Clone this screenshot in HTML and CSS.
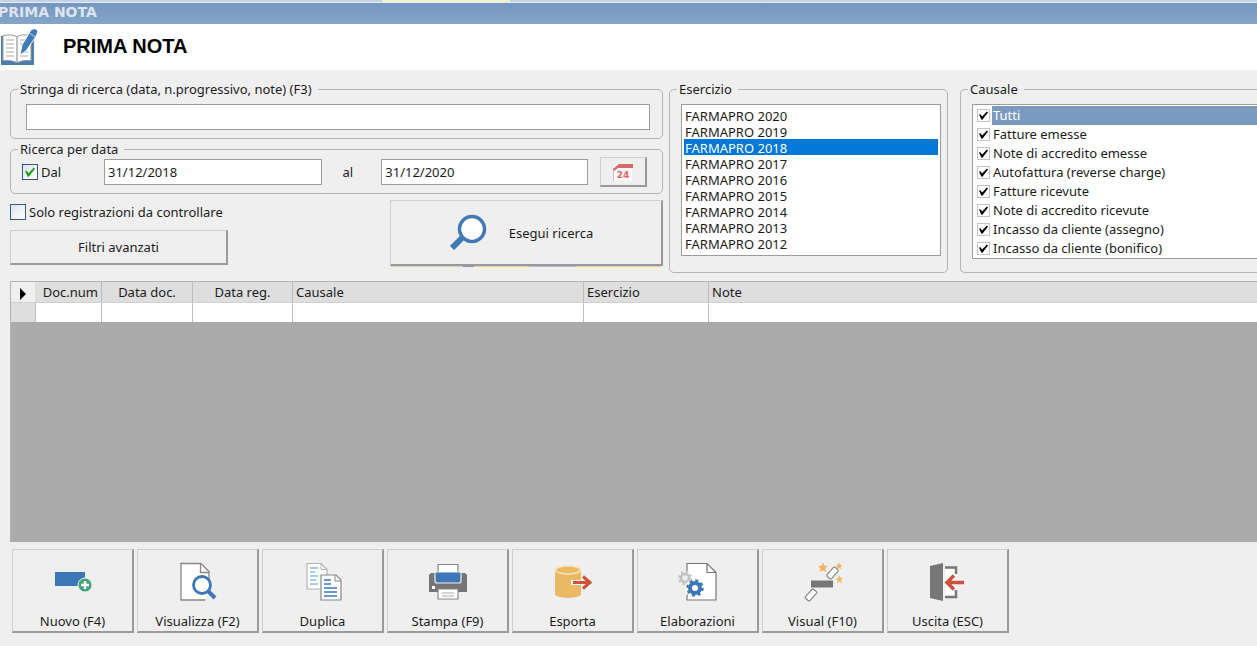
FILE: index.html
```html
<!DOCTYPE html>
<html lang="it">
<head>
<meta charset="utf-8">
<title>Prima nota</title>
<link rel="stylesheet" href="styles.css">
</head>
<body>
<div class="strip"><span class="strip-tab"></span></div>
<div class="titlebar">PRIMA NOTA</div>
<header class="header">
  <svg class="header-icon" viewBox="0 0 38 38" aria-hidden="true">
    <path d="M1 8h3v25h27V8h3v29H1z" fill="#4a7db0"/>
    <path d="M3 7.500q8-2 14 1q6-3 14-1v25q-8-1-14 2q-6-3-14-2z" fill="#fff" stroke="#999" stroke-width="1"/>
    <path d="M17 8v26" stroke="#aaa" stroke-width="1.500"/>
    <path d="M6 12h8M6 16h8M6 20h8M6 24h8M6 28h8M20 12h6M20 16h4M20 24h1M20 28h8M25 24h3" stroke="#aaa" stroke-width="1"/>
    <path d="M20 27l2-10L31 2q4-3 7 1q-1 4-3 7L26 23z" fill="#3f7cba" stroke="#fff" stroke-width="1"/>
    <path d="M29.500 5l6 4" stroke="#b8d0e8" stroke-width="1"/>
  </svg>
  <h1>PRIMA NOTA</h1>
</header>

<main class="content">
  <form class="filters">
    <div class="search">
      <fieldset class="box query-box">
        <legend>Stringa di ricerca (data, n.progressivo, note) (F3)</legend>
        <input class="field query" type="text" aria-label="Stringa di ricerca">
      </fieldset>
      <fieldset class="box dates">
        <legend>Ricerca per data</legend>
        <div class="date-row">
          <label class="check dal"><input type="checkbox" class="tick green" checked>Dal</label>
          <input class="field from" type="text" value="31/12/2018" aria-label="Dal">
          <label class="al" for="to">al</label>
          <input class="field to" id="to" type="text" value="31/12/2020">
          <button class="btn calendar" type="button" aria-label="Calendario">
            <svg width="22" height="20" viewBox="0 0 22 20" aria-hidden="true">
              <path d="M2 5h18v14H2z" fill="#fdf6f5"/>
              <path d="M1.500 19V6" stroke="#c9c4c4"/>
              <path d="M1 7l6-5h14v4H6l-4 3z" fill="#d46a69"/>
              <text x="11" y="16" text-anchor="middle" class="cal-day">24</text>
            </svg>
          </button>
        </div>
      </fieldset>
      <div class="actions">
        <div class="actions-left">
          <label class="check"><input type="checkbox" class="tick green">Solo registrazioni da controllare</label>
          <button class="btn advanced" type="button">Filtri avanzati</button>
        </div>
        <button class="btn run" type="button">
          <svg width="38" height="38" viewBox="0 0 38 38" aria-hidden="true">
            <path d="M14 23L3 34" stroke="#4079b5" stroke-width="6"/>
            <circle cx="23" cy="15" r="12.500" fill="#fff" stroke="#4079b5" stroke-width="3.500"/>
          </svg>
          Esegui ricerca
        </button>
      </div>
    </div>

    <fieldset class="box years">
      <legend>Esercizio</legend>
      <select class="list" size="9" aria-label="Esercizio">
        <option>FARMAPRO 2020</option>
        <option>FARMAPRO 2019</option>
        <option selected>FARMAPRO 2018</option>
        <option>FARMAPRO 2017</option>
        <option>FARMAPRO 2016</option>
        <option>FARMAPRO 2015</option>
        <option>FARMAPRO 2014</option>
        <option>FARMAPRO 2013</option>
        <option>FARMAPRO 2012</option>
      </select>
    </fieldset>

    <fieldset class="box causes">
      <legend>Causale</legend>
      <div class="checklist">
        <label class="item current"><input type="checkbox" class="tick" checked><span>Tutti</span></label>
        <label class="item"><input type="checkbox" class="tick" checked><span>Fatture emesse</span></label>
        <label class="item"><input type="checkbox" class="tick" checked><span>Note di accredito emesse</span></label>
        <label class="item"><input type="checkbox" class="tick" checked><span>Autofattura (reverse charge)</span></label>
        <label class="item"><input type="checkbox" class="tick" checked><span>Fatture ricevute</span></label>
        <label class="item"><input type="checkbox" class="tick" checked><span>Note di accredito ricevute</span></label>
        <label class="item"><input type="checkbox" class="tick" checked><span>Incasso da cliente (assegno)</span></label>
        <label class="item"><input type="checkbox" class="tick" checked><span>Incasso da cliente (bonifico)</span></label>
      </div>
    </fieldset>
  </form>

  <div class="grid">
    <table>
      <colgroup><col class="c-mark"><col class="c-num"><col class="c-doc"><col class="c-reg"><col class="c-cause"><col class="c-year"><col></colgroup>
      <thead>
        <tr>
          <th class="mark"><svg width="8" height="12" viewBox="0 0 8 12" aria-hidden="true"><path d="M1 0l6 6l-6 6z" fill="#000"/></svg></th>
          <th class="right">Doc.num</th><th class="center">Data doc.</th><th class="center">Data reg.</th><th>Causale</th><th>Esercizio</th><th>Note</th>
        </tr>
      </thead>
      <tbody><tr><td class="rowhead"></td><td></td><td></td><td></td><td></td><td></td><td></td></tr></tbody>
    </table>
  </div>
</main>

<footer class="toolbar">
  <button class="btn tool" type="button">
    <svg viewBox="0 0 40 40" aria-hidden="true">
      <path d="M2 10h30v14H2z" fill="#3c78b8"/>
      <circle cx="32" cy="23" r="7" fill="#42a47c" stroke="#efefef"/>
      <path d="M32 19v8M28 23h8" stroke="#fff" stroke-width="2.500"/>
    </svg>Nuovo (F4)</button>
  <button class="btn tool" type="button">
    <svg viewBox="0 0 40 40" aria-hidden="true">
      <path d="M3 1.500h20l8 8V38H3z" fill="#fff" stroke="#888" stroke-width="1.300"/>
      <path d="M22.500 1.500v9H31" fill="none" stroke="#888" stroke-width="1.300"/>
      <path d="M27 39h8V26h-5z" fill="#efefef"/>
      <path d="M29 28l8 8" stroke="#3c78b8" stroke-width="4"/>
      <circle cx="24" cy="23" r="8.500" fill="#fff" stroke="#3c78b8" stroke-width="2.800"/>
    </svg>Visualizza (F2)</button>
  <button class="btn tool" type="button">
    <svg viewBox="0 0 40 40" aria-hidden="true">
      <path d="M4 1.500h14l6 6V27H4z" fill="#fff" stroke="#b5b5b5" stroke-width="1.200"/>
      <path d="M18 1.500v6h6" fill="none" stroke="#b5b5b5"/>
      <path d="M7 6h8M7 10h5M7 14h8M7 18h6M7 22h8" stroke="#8db8e2" stroke-width="1.300"/>
      <path d="M18 13h15l5 5v20H18z" fill="#fff" stroke="#888" stroke-width="1.200"/>
      <path d="M32 13v6h6" fill="none" stroke="#888"/>
      <path d="M21 18h7M21 22h7M21 26h13M21 30h13M21 34h13" stroke="#3c78b8" stroke-width="1.300"/>
    </svg>Duplica</button>
  <button class="btn tool" type="button">
    <svg viewBox="0 0 40 40" aria-hidden="true">
      <path d="M10 2.500h20v10H10z" fill="#fff" stroke="#888" stroke-width="1.200"/>
      <path d="M3 11h34l2 2v17H1V13z" fill="#757575"/>
      <path d="M7 10h26v9q0 2-2 2H9q-2 0-2-2z" fill="#3c78b8" stroke="#efefef" stroke-width="1.200"/>
      <path d="M4 24h3v3H4z" fill="#fff"/>
      <path d="M10 27h20v10H10z" fill="#fff" stroke="#888" stroke-width="1.200"/>
      <path d="M14 31h12M14 34h12" stroke="#aaa"/>
    </svg>Stampa (F9)</button>
  <button class="btn tool" type="button">
    <svg viewBox="0 0 40 40" aria-hidden="true">
      <path d="M2 8v24c0 5 26 5 26 0V8z" fill="#ebb863"/>
      <ellipse cx="15" cy="8" rx="12.500" ry="4" fill="#ebb863" stroke="#f8e3bd" stroke-width="1.500"/>
      <path d="M18 20.500h18M30 14.500l7 6l-7 6" fill="none" stroke="#efefef" stroke-width="5"/>
      <path d="M20 20.500h17M30 14.500l7 6l-7 6" fill="none" stroke="#d0503a" stroke-width="3"/>
    </svg>Esporta</button>
  <button class="btn tool" type="button">
    <svg viewBox="0 0 40 40" aria-hidden="true">
      <path d="M9 1.500h20l9 9V38H9z" fill="#fff" stroke="#777" stroke-width="1.200"/>
      <path d="M29 1.500v9h9" fill="none" stroke="#777" stroke-width="1.200"/>
      <path d="M0 9h11v15h-2v9h1H0z" fill="#efefef"/>
      <circle cx="7" cy="16" r="4" fill="none" stroke="#c2c2c2" stroke-width="2.500"/>
      <circle cx="7" cy="16" r="6" fill="none" stroke="#c2c2c2" stroke-width="2" stroke-dasharray="2.350 2.350"/>
      <circle cx="17" cy="26" r="9.500" fill="#fff"/>
      <circle cx="17" cy="26" r="5" fill="none" stroke="#3c78b8" stroke-width="4"/>
      <circle cx="17" cy="26" r="7.500" fill="none" stroke="#3c78b8" stroke-width="2.500" stroke-dasharray="2.950 2.950"/>
    </svg>Elaborazioni</button>
  <button class="btn tool" type="button">
    <svg viewBox="0 0 40 40" aria-hidden="true">
      <path d="M8 18.500h22v7H8z" fill="#777"/>
      <rect x="-6" y="-3" width="12" height="6" rx="1.500" transform="translate(29.500 11) rotate(-48)" fill="#fff" stroke="#888" stroke-width="1.200"/>
      <rect x="-6" y="-3" width="12" height="6" rx="1.500" transform="translate(8 33) rotate(-48)" fill="#fff" stroke="#888" stroke-width="1.200"/>
      <path d="M20 1l1.200 3l3.300.2l-2.500 2.200l.8 3.200l-2.800-1.700l-2.800 1.700l.8-3.200l-2.500-2.200l3.300-.2z" fill="#f2b560" stroke="#f2b560" stroke-width=".6"/>
      <path d="M36 1l.8 2l2.200.2l-1.700 1.400l.5 2.200l-1.800-1.200l-1.800 1.200l.5-2.200l-1.700-1.400l2.200-.2zM36.500 14l1 2.300l2 .2l-1.700 1.600l.6 2.500l-1.900-1.300l-2 1.300l.6-2.500l-2-1.600l2.400-.2z" fill="#f2b560" stroke="#f2b560" stroke-width=".6"/>
    </svg>Visual (F10)</button>
  <button class="btn tool" type="button">
    <svg viewBox="0 0 40 40" aria-hidden="true">
      <path d="M17 5.500h11V35H17z" fill="#fff"/>
      <path d="M17 5.500h11V12M28 28v7H17" fill="none" stroke="#777" stroke-width="2.500"/>
      <path d="M2 4l13-3v38L2 36z" fill="#777"/>
      <path d="M19 20.500h17M26 13.500l-7 7l7 7" fill="none" stroke="#d0503a" stroke-width="3.500"/>
    </svg>Uscita (ESC)</button>
</footer>
</body>
</html>
```
FILE: styles.css
```css
* { box-sizing: border-box; }

body {
  margin: 0;
  min-height: 100vh;
  display: flex;
  flex-direction: column;
  overflow-x: hidden;
  background: #efefef;
  color: #1c1c1c;
  font: 13px/16px "Noto Sans", "DejaVu Sans", sans-serif;
}

input, button, select { font: inherit; color: inherit; margin: 0; }

.strip { height: 3px; padding-left: 382px; background: #c3d2e6; border-bottom: 1px solid #e8eef5; }
.strip-tab { display: block; width: 128px; height: 2px; background: #f4f2c8; }

.titlebar {
  height: 21px;
  background: linear-gradient(#7497c0, #85a5c8);
  color: #dde5ee;
  font: bold 14px/19px "DejaVu Sans", sans-serif;
  text-indent: -2px;
}

.header { height: 46px; display: flex; align-items: center; gap: 25px; background: #fff; }
.header-icon { width: 38px; height: 38px; }
h1 { margin: 0; padding-bottom: 2px; color: #000; font: bold 20px/24px "Liberation Sans", Arial, sans-serif; }

.content { flex: 1; display: flex; flex-direction: column; padding: 11px 0 0 10px; }

.filters {
  display: grid;
  grid-template-columns: minmax(0, 653px) 279px minmax(0, 1fr);
  column-gap: 6px;
}

.box { margin: 0; min-width: 0; padding: 7px 12px 8px 11px; border: 1px solid #b4b4b4; border-radius: 5px; }
.box legend { margin-left: -4px; padding: 0 6px 0 2px; }
.query-box { padding-left: 15px; }
.query-box legend { margin-left: -8px; }

.field { height: 26px; padding: 0 3px; background: #fff; border: 1px solid #9c9c9c; border-radius: 0; }
.query { display: block; width: 100%; }

.btn {
  display: flex;
  align-items: center;
  justify-content: center;
  padding: 0;
  background: #efefef;
  border: 1px solid #cfcfcf;
  border-right: 2px solid #9a9a9a;
  border-bottom: 2px solid #9a9a9a;
  border-radius: 0;
}

.search { display: flex; flex-direction: column; gap: 2px; }
.dates { padding: 0 15px 6px 11px; }
.date-row { display: flex; align-items: center; }
.check { display: flex; align-items: center; gap: 3px; }
.dal { width: 82px; }
.from { flex: 219 1 0; min-width: 0; }
.al { width: 59px; text-align: center; padding-right: 8px; }
.to { flex: 207 1 0; min-width: 0; }
.calendar { width: 47px; height: 30px; margin-left: 12px; }
.cal-day { font: bold 9px "DejaVu Sans", sans-serif; fill: #d46a69; }

.actions { display: flex; justify-content: space-between; padding-top: 4px; }
.actions-left { display: flex; flex-direction: column; gap: 10px; padding-top: 4px; }
.advanced { width: 218px; height: 35px; }
.run { position: relative; width: 273px; height: 66px; gap: 22px; padding-right: 10px; }
.run::after {
  content: "";
  position: absolute;
  left: 0;
  right: 0;
  bottom: -3px;
  height: 1px;
  background: linear-gradient(90deg, #d8d2c4 72px, #8f90a0 72px 83px, #ecd28e 83px 138px, #b9b6d2 138px 185px, #ecd28e 185px);
}

.tick {
  appearance: none;
  flex: none;
  width: 13px;
  height: 13px;
  border: 1px solid #c4c4c4;
  background: #fff;
  display: grid;
  place-items: center;
}
.tick:checked::before {
  content: "";
  width: 9px;
  height: 9px;
  background: #000;
  clip-path: polygon(0 40%, 15% 35%, 35% 60%, 88% 5%, 100% 18%, 38% 98%, 25% 95%);
}
.green { width: 16px; height: 16px; border-color: #33588c; background: linear-gradient(135deg, #dfe3e8, #fff); }
.green:checked::before { width: 10px; height: 10px; background: #22a022; }

.years { padding: 7px 6px 16px 11px; }
.list {
  display: block;
  width: 100%;
  height: 152px;
  padding: 2px;
  background: #fff;
  border: 1px solid #9c9c9c;
  border-radius: 0;
  overflow: hidden;
  outline: 0;
}
.list option { height: 16px; min-height: 16px; padding: 0 1px; line-height: 16px; }
.list option:checked { background: #0078d7 linear-gradient(#0078d7, #0078d7); -webkit-text-fill-color: #fff; }

.causes { margin-left: 6px; padding: 7px 0 12px 11px; border-right: 0; border-radius: 5px 0 0 5px; }
.checklist { padding: 1px 0 0 4px; background: #fff; border: 1px solid #9c9c9c; border-right: 0; }
.item { display: flex; align-items: center; gap: 2px; height: 19px; }
.item span { flex: 1; padding-left: 1px; line-height: 19px; white-space: nowrap; }
.current span { background: #7a9abf; color: #fff; }

.grid { flex: 1; margin-top: 8px; background: #ababab; border-left: 1px solid #b4b4b4; border-top: 1px solid #b4b4b4; }
table { width: 100%; border-collapse: separate; border-spacing: 0; table-layout: fixed; }
.c-mark { width: 25px; }
.c-num { width: 66px; }
.c-doc { width: 91px; }
.c-reg { width: 100px; }
.c-cause { width: 291px; }
.c-year { width: 125px; }
th { height: 20px; padding: 0 3px; background: #dedede; border-right: 1px solid #bcbcbc; text-align: left; font-weight: normal; line-height: 18px; white-space: nowrap; }
td { height: 20px; padding: 0; background: #fff; border-right: 1px solid #bcbcbc; border-top: 1px solid #d0d0d0; }
th:last-child, td:last-child { border-right: 0; }
.mark { text-align: center; background: #efefef; border-right-color: #dedede; }
.mark svg { vertical-align: middle; }
.rowhead { background: #dedede; }
.right { text-align: right; }
.center { text-align: center; }

.toolbar { display: flex; gap: 3px; padding: 7px 12px 13px; }
.tool { width: 122px; height: 84px; flex-direction: column; justify-content: flex-start; gap: 11px; padding-top: 12px; }
.tool svg { flex: none; width: 40px; height: 40px; }
```
